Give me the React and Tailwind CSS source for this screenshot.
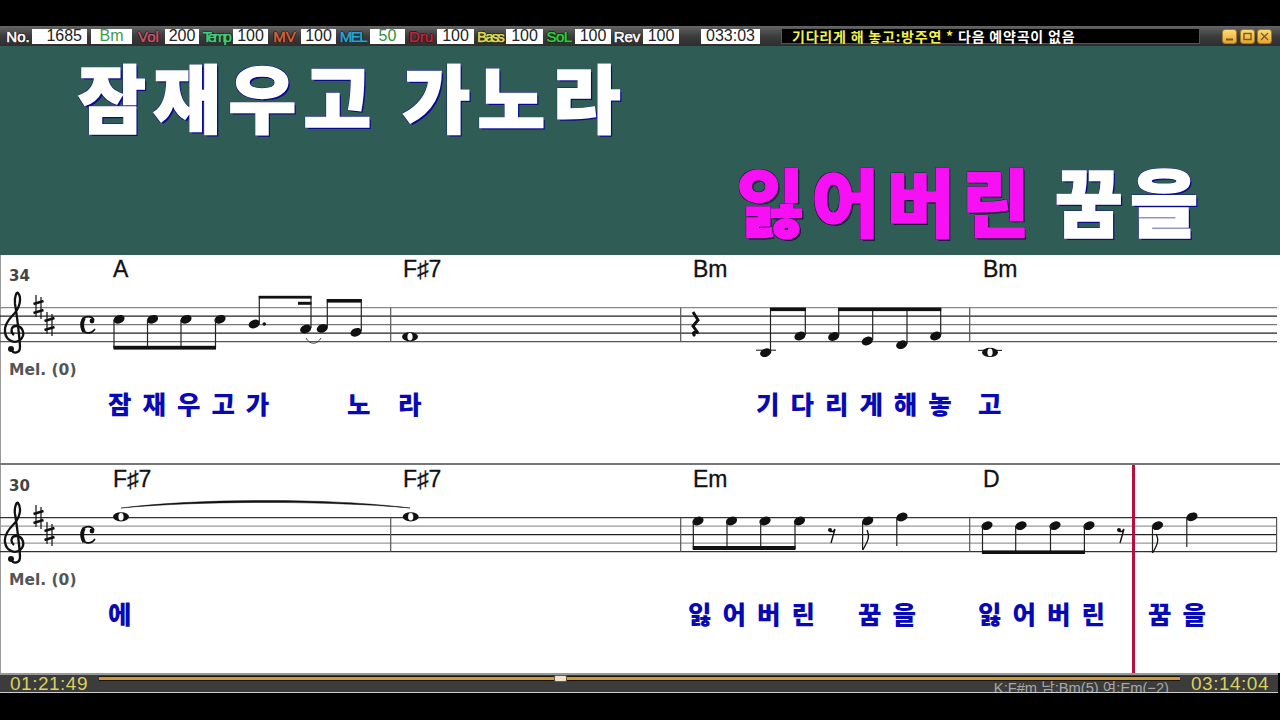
const meters = [
  { label: 'Vol', labelClass: 'w-[33px] text-[#c4566c]', value: '200', fieldClass: 'w-[34px] text-[#222]' },
  { label: 'Temp', labelClass: 'w-[34px] text-[#3fd07c] tracking-[-2.6px]', value: '100', fieldClass: 'w-[35px] text-[#222]' },
  { label: 'MV', labelClass: 'w-[33px] text-[#d9623a]', value: '100', fieldClass: 'w-[35px] text-[#222]' },
  { label: 'MEL', labelClass: 'w-[34px] text-[#2aa6d6] tracking-[-1.5px]', value: '50', fieldClass: 'w-[35px] text-[#2f8f3a]' },
  { label: 'Dru', labelClass: 'w-[32px] text-[#c2263c]', value: '100', fieldClass: 'w-[37px] text-[#222]' },
  { label: 'Bass', labelClass: 'w-[32px] text-[#dcdc4c] tracking-[-1.8px]', value: '100', fieldClass: 'w-[37px] text-[#222]' },
  { label: 'SoL', labelClass: 'w-[32px] text-[#32cc3e] tracking-[-0.5px]', value: '100', fieldClass: 'w-[36px] text-[#222]' },
  { label: 'Rev', labelClass: 'w-[32px] text-white', value: '100', fieldClass: 'w-[36px] text-[#222]' },
];

function Field({ className, children }) {
  return (
    <div className={`h-[15px] bg-white flex items-center justify-center text-[16px] leading-none font-['Liberation_Sans',sans-serif] ${className}`}>
      {children}
    </div>
  );
}

function WinButton({ children }) {
  return (
    <div className="w-[15px] h-[15px] rounded-[3px] border border-[#a07c24] bg-linear-to-b from-[#fbdc74] to-[#e8a430] flex items-center justify-center">
      <svg width="11" height="11" viewBox="0 0 11 11" fill="none" stroke="#7a5a18">{children}</svg>
    </div>
  );
}

function Toolbar() {
  const labelBase = "text-center text-[15px] leading-none whitespace-nowrap font-['Liberation_Sans',sans-serif] [-webkit-text-stroke:0.6px_currentColor] [text-shadow:-1px_0_0_#111,1px_0_0_#111,0_-1px_0_#111,0_1px_0_#111]";
  return (
    <div className="h-[20px] flex items-center pl-[4px] pr-[8px] bg-linear-to-b from-[#666] via-[#3c3c3c] to-[#2e2e2e]">
      <div className={`${labelBase} w-[28px] text-white`}>No.</div>
      <Field className="w-[55px] !justify-end pr-[5px] text-[#222]">1685</Field>
      <Field className="w-[41px] ml-[4px] text-[#3f9a48]">Bm</Field>
      {meters.map((m) => (
        <div key={m.label} className="flex items-center">
          <div className={`${labelBase} ${m.labelClass}`}>{m.label}</div>
          <Field className={m.fieldClass}>{m.value}</Field>
        </div>
      ))}
      <Field className="w-[59px] ml-[22px] text-[#222]">033:03</Field>
      <div className="w-[419px] h-[16px] ml-[21px] bg-black border border-[#555] pl-[10px] flex items-center text-[14px] leading-none font-bold tracking-[0.8px] whitespace-nowrap font-['Noto_Sans_CJK_KR',sans-serif]">
        <span className="text-[#f2f24a]">기다리게 해 놓고:방주연 *</span>
        <span className="text-white ml-[4px]">다음 예약곡이 없음</span>
      </div>
      <div className="ml-auto flex gap-[2.5px]">
        <WinButton><path d="M2 8.5h7" strokeWidth="2" /></WinButton>
        <WinButton><rect x="2" y="2.5" width="7" height="6" strokeWidth="1.4" /></WinButton>
        <WinButton><path d="M2 2l7 7M9 2l-7 7" strokeWidth="1.3" /></WinButton>
      </div>
    </div>
  );
}

function TitlePanel() {
  const line = "text-[74px] leading-[90px] tracking-[7px] font-black whitespace-nowrap font-['Noto_Sans_CJK_KR',sans-serif]";
  const whiteText = "text-white [-webkit-text-stroke:1.5px_white] [text-shadow:2px_2px_0_#0a0a8c,-1px_-1px_0_#0a0a8c,1px_-1px_0_#0a0a8c,-1px_1px_0_#0a0a8c]";
  return (
    <div className="h-[209px] bg-[#2f5c54]">
      <div className={`${line} ${whiteText} pl-[78px] pt-[4px]`}>잠재우고 가노라</div>
      <div className={`${line} flex justify-end pr-[75px] pt-[14px]`}>
        <span className="text-[#f810f4] [-webkit-text-stroke:1.5px_#f810f4] [text-shadow:2px_2px_0_#101030,-1px_-1px_0_#101030,1px_-1px_0_#101030,-1px_1px_0_#101030]">잃어버린</span>
        <span className={`${whiteText} ml-[18px]`}>꿈을</span>
      </div>
    </div>
  );
}

function Head({ x, y }) {
  return <ellipse cx={x} cy={y} rx="5.8" ry="4.1" transform={`rotate(-22 ${x} ${y})`} fill="#111" />;
}

function WholeNote({ x, y }) {
  return (
    <g>
      <ellipse cx={x} cy={y} rx="8" ry="4.6" fill="#111" />
      <ellipse cx={x} cy={y} rx="2.6" ry="3.8" fill="#fff" />
    </g>
  );
}

// stem goes from the head to the beam, x sits on the side of the head
function Stem({ x, y1, y2 }) {
  return <line x1={x} x2={x} y1={y1} y2={y2} stroke="#222" strokeWidth="1.2" />;
}

function Beam({ x1, x2, y, h = 3.5 }) {
  return <rect x={x1} y={y} width={x2 - x1} height={h} fill="#111" />;
}

function Clef() {
  return (
    <g fill="none" stroke="#111">
      <path
        d="M11 349C12 354 20 354 20 347C20 342 17 315 15 304C14 297 17 291 18 293C22 298 20 308 13 315C8 320 4 325 5 332C6 341 15 344 20 340C26 335 23 326 16 326C11 326 10 332 14 335"
        strokeWidth="2.3"
      />
      <circle cx="11" cy="349" r="3" fill="#111" stroke="none" />
    </g>
  );
}

function Sharp({ x, y }) {
  return (
    <g stroke="#111">
      <path d={`M${x - 2.5} ${y - 12}v22M${x + 2.5} ${y - 10}v22`} strokeWidth="1.2" />
      <path d={`M${x - 5} ${y - 3}l10 -3M${x - 5} ${y + 6}l10 -3`} strokeWidth="2.6" />
    </g>
  );
}

function KeySig({ y }) {
  return (
    <g>
      <Sharp x={38.5} y={y} />
      <Sharp x={49.5} y={y + 17} />
      <path d={`M94 ${y + 13}C91 ${y + 8} 81 ${y + 8} 81 ${y + 18}C81 ${y + 27} 91 ${y + 28} 95 ${y + 22}`} fill="none" stroke="#111" strokeWidth="1.6" />
      <path d={`M84 ${y + 11}C82 ${y + 15} 82 ${y + 21} 84 ${y + 25}`} fill="none" stroke="#111" strokeWidth="3.6" />
      <circle cx="92" cy={y + 14} r="2.4" fill="#111" />
    </g>
  );
}

function Staff({ y, colors, bars }) {
  return (
    <g>
      {[0, 8.5, 17, 25.5, 34].map((d, i) => (
        <line key={d} x1="0" x2="1277" y1={y + d} y2={y + d} stroke={colors[i]} strokeWidth="1.2" />
      ))}
      {bars.map((x) => (
        <line key={x} x1={x} x2={x} y1={y} y2={y + 34} stroke="#555" strokeWidth="1.2" />
      ))}
    </g>
  );
}

function EighthRest({ x, y }) {
  return (
    <g fill="none" stroke="#111">
      <circle cx={x - 2} cy={y} r="2" fill="#111" stroke="none" />
      <path d={`M${x - 2} ${y + 1.5}C${x} ${y + 2} ${x + 2} ${y + 1} ${x + 3} ${y - 1}L${x - 1} ${y + 13}`} strokeWidth="1.4" />
    </g>
  );
}

function ScoreTop() {
  return (
    <svg className="block" width="1280" height="75" viewBox="0 285 1280 75">
      <Staff y={307.7} colors={['#888', '#222', '#777', '#222', '#555']} bars={[390.7, 680.7, 969.7]} />
      <Clef />
      <KeySig y={307} />
      {[119, 152.5, 186, 220].map((x) => <Head key={x} x={x} y={319.3} />)}
      {[114, 147.5, 181, 215.5].map((x) => <Stem key={x} x={x} y1={320} y2={348} />)}
      <Beam x1={113.4} x2={216} y={345.8} h={3.8} />
      <Head x={254.3} y={324} />
      <circle cx="264.3" cy="324" r="1.8" fill="#111" />
      <Stem x={259.3} y1={323} y2={296} />
      <Beam x1={258.8} x2={311.5} y={295.8} h={2.8} />
      <Beam x1={298} x2={311.5} y={301.8} h={3} />
      <Head x={305.7} y={329} />
      <Stem x={311} y1={328} y2={296} />
      <Head x={322.3} y={328.4} />
      <Stem x={327.3} y1={327} y2={299} />
      <Beam x1={326.8} x2={361.8} y={299} h={3.6} />
      <Head x={356} y={332.3} />
      <Stem x={361.3} y1={331} y2={299} />
      <path d="M306 338C310 345 317 345 321 338" fill="none" stroke="#333" strokeWidth="0.9" />
      <WholeNote x={410} y={336.8} />
      <path d="M693 312L698 320L693 326L698 333C694 331 692 333 695 336" fill="none" stroke="#111" strokeWidth="3" />
      <line x1="756" x2="776" y1="350.2" y2="350.2" stroke="#222" strokeWidth="1.1" />
      <Head x={765.7} y={352.7} />
      <Stem x={770.5} y1={351} y2={308} />
      <Head x={800} y={336} />
      <Stem x={805.3} y1={335} y2={308} />
      <Beam x1={770} x2={805.8} y={307.6} />
      <Head x={833.7} y={336.5} />
      <Stem x={838.7} y1={335} y2={308} />
      <Head x={867.3} y={341} />
      <Stem x={872.7} y1={340} y2={308} />
      <Head x={901.7} y={344.7} />
      <Stem x={907} y1={344} y2={308} />
      <Head x={935.7} y={336} />
      <Stem x={940.7} y1={335} y2={308} />
      <Beam x1={838} x2={941.2} y={307.6} />
      <line x1="978" x2="1002" y1="350.4" y2="350.4" stroke="#222" strokeWidth="1.1" />
      <WholeNote x={990} y={352.4} />
    </svg>
  );
}

function ScoreBottom() {
  return (
    <svg className="block" width="1280" height="75" viewBox="0 495 1280 75">
      <Staff y={517.7} colors={['#333', '#999', '#222', '#999', '#333']} bars={[390.7, 680.7, 969.7, 1276.6]} />
      <g transform="translate(0 210)">
        <Clef />
        <KeySig y={307} />
      </g>
      <path d="M121 508C200 498 330 498 410 508C330 500.6 200 500.6 121 508Z" fill="#111" stroke="#111" strokeWidth="0.5" />
      <WholeNote x={121} y={516.8} />
      <WholeNote x={410.7} y={516.8} />
      {[698, 731.5, 765, 799.5].map((x) => <Head key={x} x={x} y={521} />)}
      {[693.3, 727, 760.7, 795].map((x) => <Stem key={x} x={x} y1={522} y2={549} />)}
      <Beam x1={692.8} x2={795.5} y={546} h={4} />
      <EighthRest x={832} y={530} />
      <Head x={867.7} y={521} />
      <Stem x={862.6} y1={522} y2={550} />
      <path d="M862.6 550C866 544 871 538 867 530" fill="none" stroke="#111" strokeWidth="1.3" />
      <Head x={902} y={517} />
      <Stem x={896.8} y1={518} y2={546} />
      {[987, 1021, 1055, 1089].map((x) => <Head key={x} x={x} y={525.7} />)}
      {[982.5, 1015.7, 1050.5, 1084.4].map((x) => <Stem key={x} x={x} y1={526} y2={553} />)}
      <Beam x1={982} x2={1084.9} y={550.4} h={3.6} />
      <EighthRest x={1121} y={530} />
      <Head x={1157.5} y={525.7} />
      <Stem x={1152.5} y1={526} y2={553} />
      <path d="M1152.5 553C1156 547 1160 541 1156 534" fill="none" stroke="#111" strokeWidth="1.3" />
      <Head x={1192} y={516.8} />
      <Stem x={1186.8} y1={518} y2={547} />
    </svg>
  );
}

function Chords({ num, items }) {
  return (
    <div className="h-[30px] grid grid-cols-[100px_290px_290px_290px_1fr] text-[23px] leading-none text-[#111] font-['Liberation_Sans',sans-serif] [-webkit-text-stroke:0.3px_#111]">
      <div className="pl-[9px] pt-[14px] text-[15px] font-bold text-[#444] font-['DejaVu_Sans',sans-serif] [-webkit-text-stroke:0]">{num}</div>
      {items.map((c, i) => (
        <div key={i} className="pl-[13px] pt-[3px]">{c}</div>
      ))}
    </div>
  );
}

function MelLabel() {
  return (
    <div className="pl-[9px] pt-px h-[18px] text-[15.5px] leading-[18px] font-bold text-[#555] font-['DejaVu_Sans',sans-serif]">Mel. (0)</div>
  );
}

function Lyrics({ children }) {
  return (
    <div className="flex pl-[108px] pt-[9px] text-[25.5px] leading-[32px] font-black tracking-[11px] text-[#0808b4] font-['Noto_Sans_CJK_KR',sans-serif]">
      {children}
    </div>
  );
}

function TopRow() {
  const lyric = "whitespace-nowrap shrink-0";
  return (
    <div className="h-[208px] bg-white border-l border-[#999]">
      <div className="-ml-px">
        <Chords num="34" items={['A', 'F♯7', 'Bm', 'Bm']} />
        <ScoreTop />
        <MelLabel />
        <Lyrics>
          <span className={`${lyric} w-[239px]`}>잠재우고가</span>
          <span className={`${lyric} w-[51px]`}>노</span>
          <span className={`${lyric} w-[358px]`}>라</span>
          <span className={`${lyric} w-[222px]`}>기다리게해놓</span>
          <span className={lyric}>고</span>
        </Lyrics>
      </div>
    </div>
  );
}

function BottomRow() {
  const lyric = "whitespace-nowrap shrink-0";
  return (
    <div className="relative h-[208px] bg-white border-l border-[#999]">
      <div className="-ml-px">
        <Chords num="30" items={['F♯7', 'F♯7', 'Em', 'D']} />
        <ScoreBottom />
        <MelLabel />
        <Lyrics>
          <span className={`${lyric} w-[580px]`}>에</span>
          <span className={`${lyric} w-[170px]`}>잃어버린</span>
          <span className={`${lyric} w-[120px]`}>꿈을</span>
          <span className={`${lyric} w-[170px]`}>잃어버린</span>
          <span className={lyric}>꿈을</span>
        </Lyrics>
      </div>
      <div className="absolute top-0 bottom-0 left-[1131px] w-[3px] bg-[#b8103c]" />
    </div>
  );
}

function BottomBar() {
  const time = "text-[19px] leading-[17px] tracking-[0.5px] text-[#d8d060] font-['Liberation_Sans',sans-serif]";
  return (
    <div className="w-[1278px] h-[20px] bg-[#3c3c3c] border-t-2 border-b border-t-[#999] border-b-[#ccc] flex overflow-hidden">
      <div className={`${time} w-[99px] pl-[10px]`}>01:21:49</div>
      <div className="w-[1081px] pt-[1px] flex flex-col">
        <div className="relative h-[5px] shrink-0 bg-[#c79a3c] border-y border-[#1c1408]">
          <div className="absolute left-[455px] -top-[2px] w-[13px] h-[7px] rounded-[2px] bg-[#f2e4cc] border border-[#6a5a40]" />
        </div>
        <div className="self-end pr-[11px] -mt-[1px] text-[14.7px] leading-[16px] text-[#a8a8a8] whitespace-nowrap font-['Liberation_Sans','Noto_Sans_CJK_KR',sans-serif]">
          K:F#m 남:Bm(5) 여:Em(−2)
        </div>
      </div>
      <div className={`${time} pl-[11px]`}>03:14:04</div>
    </div>
  );
}

export default function App() {
  return (
    <div className="w-[1280px] h-[720px] bg-black overflow-hidden">
      <div className="h-[26px]" />
      <Toolbar />
      <TitlePanel />
      <TopRow />
      <div className="h-[2px] bg-[#777]" />
      <BottomRow />
      <BottomBar />
    </div>
  );
}
